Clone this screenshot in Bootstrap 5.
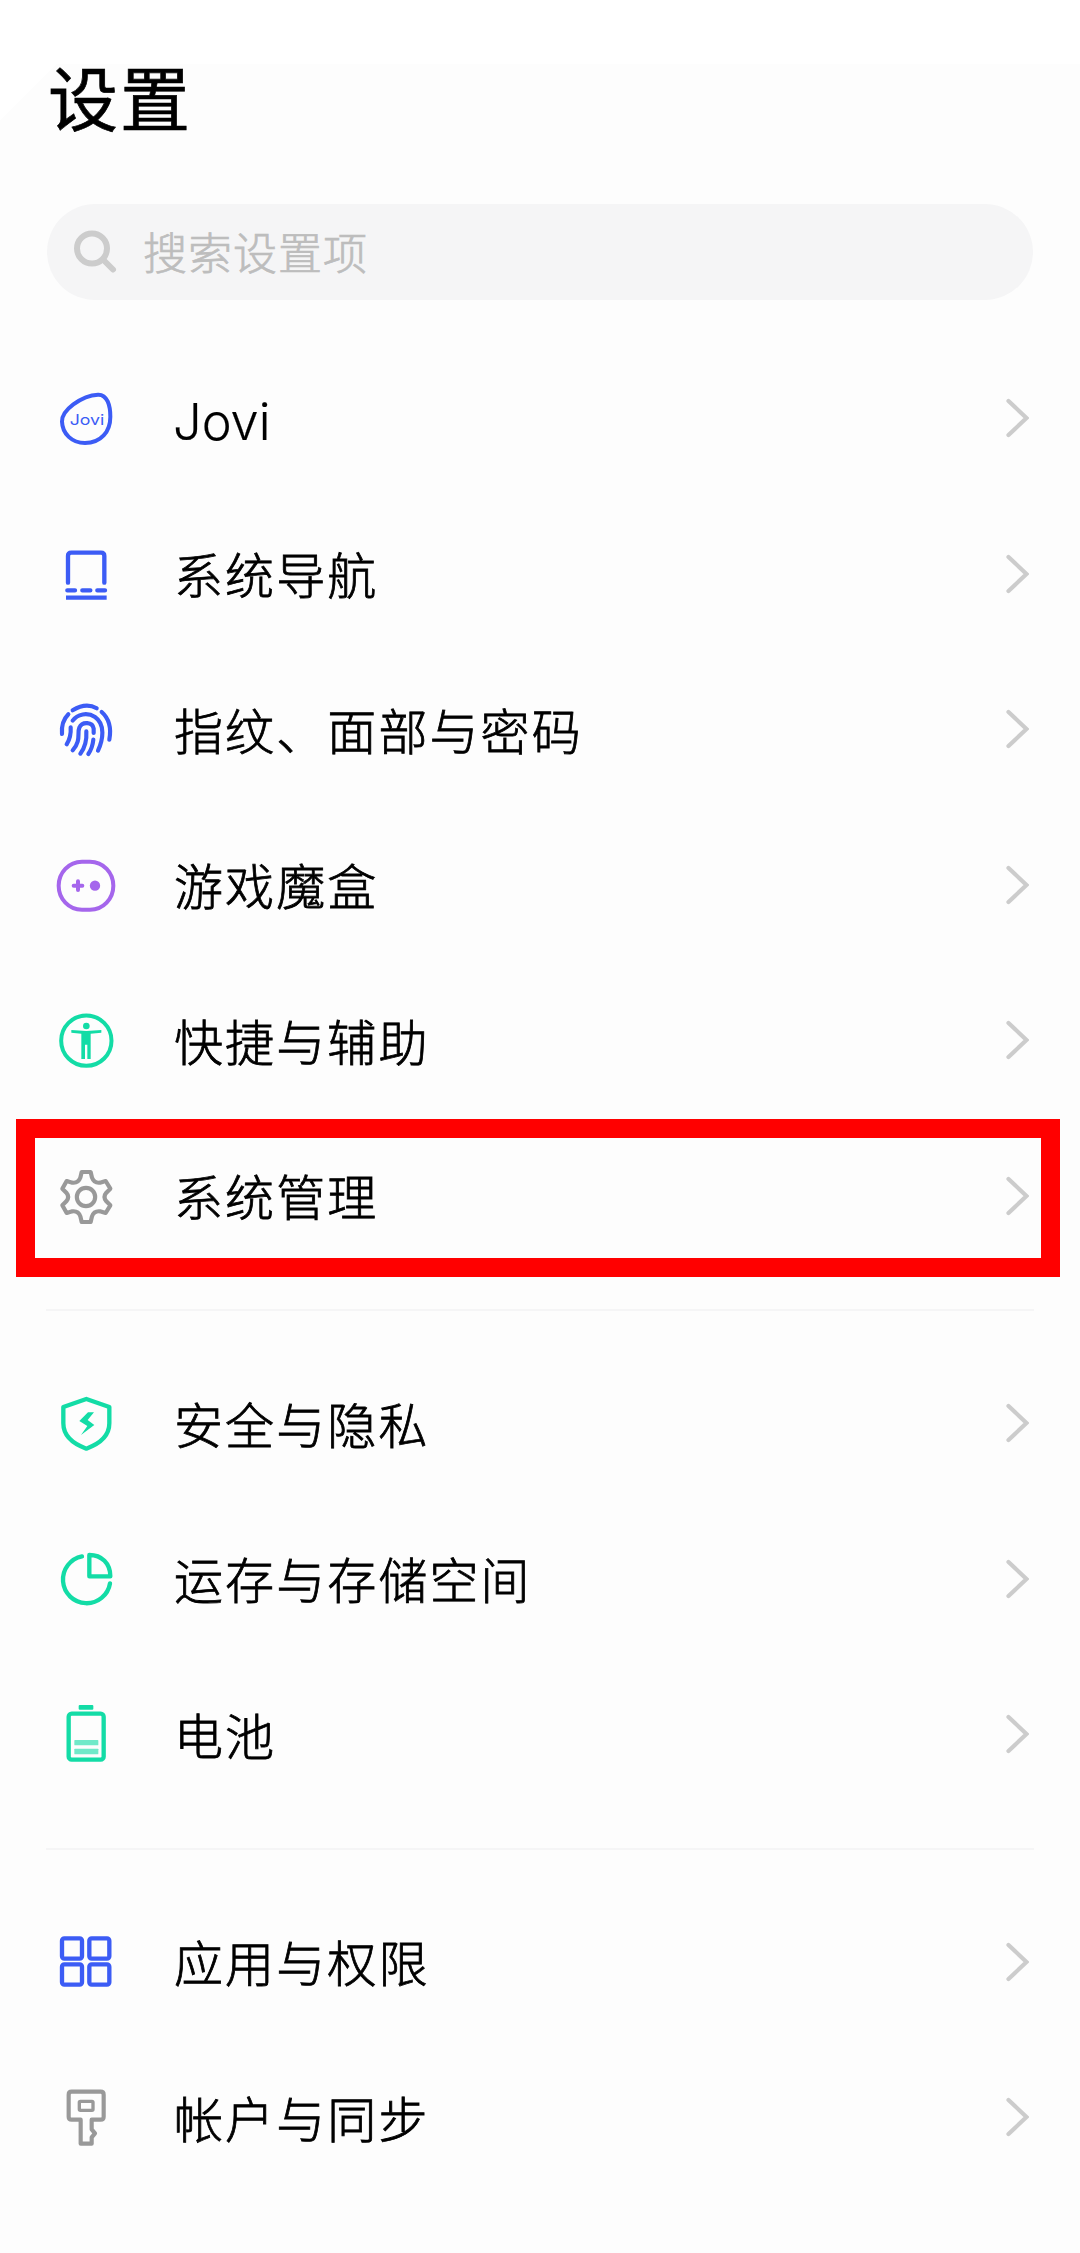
<!DOCTYPE html>
<html lang="zh-CN">
<head>
<meta charset="utf-8">
<meta name="viewport" content="width=device-width, initial-scale=1">
<title>设置</title>
<link href="https://cdn.jsdelivr.net/npm/bootstrap@5.3.0/dist/css/bootstrap.min.css" rel="stylesheet">
<style>
  body { font-family: Inter, "Noto Sans CJK SC", sans-serif; background: linear-gradient(135deg, #fff 40px, transparent 40px) 0 64px / 120px 120px no-repeat, linear-gradient(#fff 64px, #fdfdfd 64px); color: #000; }
  .screen { width: 1080px; height: 2253px; overflow: hidden; }
  .page-title { font-size: 70px; font-weight: 400; -webkit-text-stroke: .7px #000; line-height: 100px; padding: 51px 0 0 48px; height: 203.5px; letter-spacing: 2px; }
  .search-bar { margin: 0 47px 41px 47px; height: 96px; background: #f5f5f6; border-radius: 48px; padding-left: 26px; }
  .search-bar svg { width: 46px; height: 46px; }
  .search-text { font-size: 44px; line-height: 64px; letter-spacing: 1px; color: #bdbdbd; font-weight: 300; -webkit-text-stroke: .7px #bdbdbd; margin-left: 24px; padding-top: 4px; }
  .entry { height: 155.5px; padding: 0 51px 0 56px; color: #000; }
  .entry-icon { width: 60px; height: 60px; fill: none; stroke-linecap: round; stroke-linejoin: round; overflow: visible; }
  .entry-label { font-size: 49px; font-weight: 300; -webkit-text-stroke: .8px #000; line-height: 72px; letter-spacing: 2.1px; margin-left: 58px; padding-top: 7px; }
  .label-latin { font-size: 50.5px; letter-spacing: 0; padding-top: 8px; margin-left: 57px; -webkit-text-stroke-width: .2px; }
  .chevron { width: 24px; height: 42px; fill: none; stroke: #ccc; stroke-width: 4.2; stroke-linecap: round; }
  .divider { height: 2px; margin: 35.5px 46px 34.5px; background: #f5f5f6; }
  .blue { stroke: #3c5cf5; } .purple { stroke: #a566ec; } .green { stroke: #13dca6; } .gray { stroke: #999; }
  .marker { position: absolute; left: 16px; right: 20px; top: 1px; bottom: -3.5px; border: 19px solid #f00; pointer-events: none; }
</style>
</head>
<body>
<svg class="d-none"><symbol id="chev" viewBox="0 0 24 42"><path d="M3.500 4 21.500 21 3.500 38"/></symbol></svg>
<main class="screen">
  <h1 class="page-title mb-0">设置</h1>
  <div class="search-bar d-flex align-items-center">
    <svg viewBox="0 0 46 46" fill="none" stroke="#ccc" stroke-width="6"><circle cx="19" cy="19.500" r="15"/><path d="m31 31.500 9 9" stroke-linecap="round"/></svg>
    <span class="search-text">搜索设置项</span>
  </div>

  <a class="entry d-flex align-items-center text-decoration-none">
    <svg class="entry-icon blue" viewBox="48 54 180 180" stroke-width="12"><path d="M66 155C65 135 80 118 100 103C122 87 150 75 174 74C202 73 211 107 211 140C211 185 183 219 135 219C96 219 67 191 66 155Z"/><text x="89" y="166" font-size="43" textLength="104" lengthAdjust="spacingAndGlyphs" fill="#3c5cf5" stroke="none" font-family="Inter" font-weight="400">Jovi</text></svg>
    <span class="entry-label label-latin">Jovi</span><svg class="chevron ms-auto"><use href="#chev"/></svg>
  </a>
  <a class="entry d-flex align-items-center text-decoration-none">
    <svg class="entry-icon blue" viewBox="48 522 180 180" stroke-width="13"><path d="M84 638V558Q84 548 94 548H183Q193 548 193 558V638M82 661H105M127 661H151M172 661H195"/><path d="M78 683H200" stroke-linecap="butt" stroke-width="13"/></svg>
    <span class="entry-label">系统导航</span><svg class="chevron ms-auto"><use href="#chev"/></svg>
  </a>
  <a class="entry d-flex align-items-center text-decoration-none">
    <svg class="entry-icon blue" viewBox="48 58 180 180" stroke-width="12.500"><path d="M98 92Q138 67 170 86M66 163Q63 126 85 104M185 97Q218 126 208 180M80 194Q94 171 92 143M98 123C112 103 142 97 165 112C197 134 189 180 174 213M98 212C124 184 111 160 118 144C127 124 158 127 161 147V160M139 155C141 188 131 209 121 222M160 180C158 200 154 210 145 223"/></svg>
    <span class="entry-label">指纹、面部与密码</span><svg class="chevron ms-auto"><use href="#chev"/></svg>
  </a>
  <a class="entry d-flex align-items-center text-decoration-none">
    <svg class="entry-icon purple" viewBox="48 525 180 180" stroke-width="12"><path d="M126 545H150C190 545 220 578 220 617S190 689 150 689H126C86 689 56 656 56 617S86 545 126 545Z"/><path d="M101 617H127M114 604V630"/><circle cx="165" cy="617" r="15.500" fill="#a566ec" stroke="none"/></svg>
    <span class="entry-label">游戏魔盒</span><svg class="chevron ms-auto"><use href="#chev"/></svg>
  </a>
  <a class="entry d-flex align-items-center text-decoration-none">
    <svg class="entry-icon green" viewBox="48 61 180 180" stroke-width="12"><circle cx="139" cy="153" r="75.500"/><g fill="#13dca6" stroke="none"><circle cx="139" cy="109" r="10"/><path d="M94 121 139 124 184 121V129L152 132V208H142V165H135V208H124V132L94 129Z"/></g></svg>
    <span class="entry-label">快捷与辅助</span><svg class="chevron ms-auto"><use href="#chev"/></svg>
  </a>
  <a class="entry d-flex align-items-center text-decoration-none position-relative">
    <svg class="entry-icon gray" viewBox="48 528 180 180" stroke-width="12.500"><circle cx="138" cy="621" r="27.500"/><path d="M125 546H152L156 563Q162 580 180 578L197 573L211 596L199 608Q188 621 199 634L211 646L197 669L180 664Q162 662 156 679L152 696H125L121 679Q115 662 97 664L80 669L67 646L79 634Q90 621 79 608L67 596L80 573L97 578Q115 580 121 563Z"/></svg>
    <span class="entry-label">系统管理</span><svg class="chevron ms-auto"><use href="#chev"/></svg>
    <span class="marker"></span>
  </a>

  <div class="divider"></div>

  <a class="entry d-flex align-items-center text-decoration-none">
    <svg class="entry-icon green" viewBox="48 40 180 180" stroke-width="13"><path d="M139 58 208 82V131C208 173 175 194 139 207C103 194 70 173 70 131V82Z"/><path d="M144 98H162L143 121L163 136L123 166L142 139L118 124Z" fill="#13dca6" stroke="none"/></svg>
    <span class="entry-label">安全与隐私</span><svg class="chevron ms-auto"><use href="#chev"/></svg>
  </a>
  <a class="entry d-flex align-items-center text-decoration-none">
    <svg class="entry-icon green" viewBox="48 507 180 180" stroke-width="13"><path d="M126 529A71 71 0 1 0 210 610"/><path d="M148 525V589H211C211 550 185 525 148 525Z"/></svg>
    <span class="entry-label">运存与存储空间</span><svg class="chevron ms-auto"><use href="#chev"/></svg>
  </a>
  <a class="entry d-flex align-items-center text-decoration-none">
    <svg class="entry-icon green" viewBox="48 73 180 180" stroke-width="13"><rect x="86" y="102" width="105" height="138" rx="9"/><g fill="#13dca6" stroke="none"><rect x="116" y="76" width="44" height="14" rx="3"/><rect x="103" y="181" width="72" height="16" rx="2" opacity=".6"/><rect x="103" y="207" width="72" height="17" rx="2" opacity=".6"/></g></svg>
    <span class="entry-label">电池</span><svg class="chevron ms-auto"><use href="#chev"/></svg>
  </a>

  <div class="divider"></div>

  <a class="entry d-flex align-items-center text-decoration-none">
    <svg class="entry-icon blue" viewBox="48 96 180 180" stroke-width="13"><rect x="66" y="115" width="60" height="61" rx="7"/><rect x="148" y="115" width="60" height="61" rx="7"/><rect x="66" y="193" width="60" height="61" rx="7"/><rect x="148" y="193" width="60" height="61" rx="7"/></svg>
    <span class="entry-label">应用与权限</span><svg class="chevron ms-auto"><use href="#chev"/></svg>
  </a>
  <a class="entry d-flex align-items-center text-decoration-none">
    <svg class="entry-icon gray" viewBox="48 562 180 180" stroke-width="12.500"><path d="M95 576H182Q191 576 191 585V651Q191 660 182 660H155V689L165 701L155 713V732H122V660H95Q86 660 86 651V585Q86 576 95 576Z"/><rect x="118" y="605" width="41" height="27" rx="3" stroke-width="10"/></svg>
    <span class="entry-label">帐户与同步</span><svg class="chevron ms-auto"><use href="#chev"/></svg>
  </a>
</main>
<script src="https://cdn.jsdelivr.net/npm/bootstrap@5.3.0/dist/js/bootstrap.bundle.min.js"></script>
</body>
</html>
